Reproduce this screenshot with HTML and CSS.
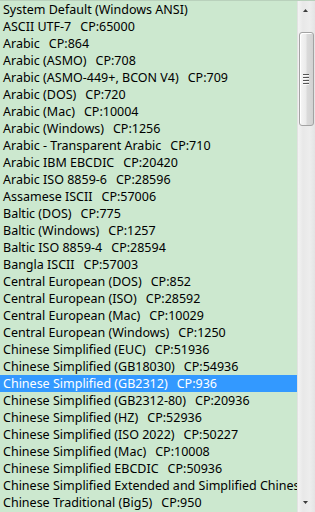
FILE: index.html
```html
<!DOCTYPE html>
<html>
<head>
<meta charset="utf-8">
<link rel="stylesheet" href="styles.css">
</head>
<body>
<div class="box">
  <ul class="list">
    <li>System Default (Windows ANSI)</li>
    <li>ASCII UTF-7<span class="cp">CP:65000</span></li>
    <li>Arabic<span class="cp">CP:864</span></li>
    <li>Arabic (ASMO)<span class="cp">CP:708</span></li>
    <li>Arabic (ASMO-449+, BCON V4)<span class="cp">CP:709</span></li>
    <li>Arabic (DOS)<span class="cp">CP:720</span></li>
    <li>Arabic (Mac)<span class="cp">CP:10004</span></li>
    <li>Arabic (Windows)<span class="cp">CP:1256</span></li>
    <li>Arabic - Transparent Arabic<span class="cp">CP:710</span></li>
    <li>Arabic IBM EBCDIC<span class="cp">CP:20420</span></li>
    <li>Arabic ISO 8859-6<span class="cp">CP:28596</span></li>
    <li>Assamese ISCII<span class="cp">CP:57006</span></li>
    <li>Baltic (DOS)<span class="cp">CP:775</span></li>
    <li>Baltic (Windows)<span class="cp">CP:1257</span></li>
    <li>Baltic ISO 8859-4<span class="cp">CP:28594</span></li>
    <li>Bangla ISCII<span class="cp">CP:57003</span></li>
    <li>Central European (DOS)<span class="cp">CP:852</span></li>
    <li>Central European (ISO)<span class="cp">CP:28592</span></li>
    <li>Central European (Mac)<span class="cp">CP:10029</span></li>
    <li>Central European (Windows)<span class="cp">CP:1250</span></li>
    <li>Chinese Simplified (EUC)<span class="cp">CP:51936</span></li>
    <li>Chinese Simplified (GB18030)<span class="cp">CP:54936</span></li>
    <li class="sel">Chinese Simplified (GB2312)<span class="cp">CP:936</span></li>
    <li>Chinese Simplified (GB2312-80)<span class="cp">CP:20936</span></li>
    <li>Chinese Simplified (HZ)<span class="cp">CP:52936</span></li>
    <li>Chinese Simplified (ISO 2022)<span class="cp">CP:50227</span></li>
    <li>Chinese Simplified (Mac)<span class="cp">CP:10008</span></li>
    <li>Chinese Simplified EBCDIC<span class="cp">CP:50936</span></li>
    <li>Chinese Simplified Extended and Simplified Chinese<span class="cp">CP:50935</span></li>
    <li>Chinese Traditional (Big5)<span class="cp">CP:950</span></li>
  </ul>
  <div class="scroll">
    <div class="btn up"><svg width="5" height="3" viewBox="0 0 5 3"><path d="M0 3 L2.5 0 L5 3 Z" fill="#3c3c3c"/></svg></div>
    <div class="track">
      <div class="thumb">
        <div class="grip"><span></span><span></span><span></span><span></span></div>
      </div>
    </div>
    <div class="btn down"><svg width="5" height="3" viewBox="0 0 5 3"><path d="M0 0 L2.5 3 L5 0 Z" fill="#3c3c3c"/></svg></div>
  </div>
</div>
</body>
</html>
```

FILE: styles.css
```css
html, body {
  margin: 0;
  padding: 0;
}
.box {
  width: 315px;
  height: 512px;
  display: flex;
  overflow: hidden;
  background: #cce8cf;
  border-top: 1px solid #b9d1bc;
  box-sizing: border-box;
}
.list {
  list-style: none;
  margin: 0;
  padding: 0;
  flex: 1;
  min-width: 0;
  overflow: hidden;
  font-family: "Noto Sans", sans-serif;
  font-size: 12.5px;
  color: #000;
}
.list li {
  height: 17px;
  line-height: 17px;
  padding-left: 3px;
  white-space: nowrap;
  overflow: hidden;
}
.list li .cp {
  margin-left: 9px;
}
.list li.sel {
  background: #3399ff;
  color: #fff;
}
.scroll {
  width: 18px;
  flex: none;
  display: flex;
  flex-direction: column;
  border-left: 1px solid #e2e2e2;
  box-sizing: border-box;
  background: linear-gradient(to right, #f3f3f3, #e8e8e8 30%, #ededed 70%, #e4e4e4);
}
.btn {
  height: 31px;
  display: flex;
  justify-content: center;
  align-items: flex-start;
  padding-top: 8px;
  padding-right: 3px;
  box-sizing: border-box;
}
.btn.down {
  height: 17px;
  align-items: flex-end;
  padding-top: 0;
  padding-bottom: 8px;
}
.track {
  flex: 1;
}
.thumb {
  height: 92px;
  margin: 0 1px;
  border: 1px solid #a3a3a3;
  border-radius: 3px;
  background: linear-gradient(to right, #f6f6f6, #ebebeb 45%, #dadada 55%, #d2d2d2);
  box-shadow: inset 1px 1px 0 #ffffff;
  display: flex;
  align-items: center;
  justify-content: center;
}
.grip {
  display: flex;
  flex-direction: column;
  gap: 1px;
  margin-right: 1px;
}
.grip span {
  display: block;
  width: 6px;
  height: 1px;
  background: #555;
  border-bottom: 1px solid #fafafa;
}
```
